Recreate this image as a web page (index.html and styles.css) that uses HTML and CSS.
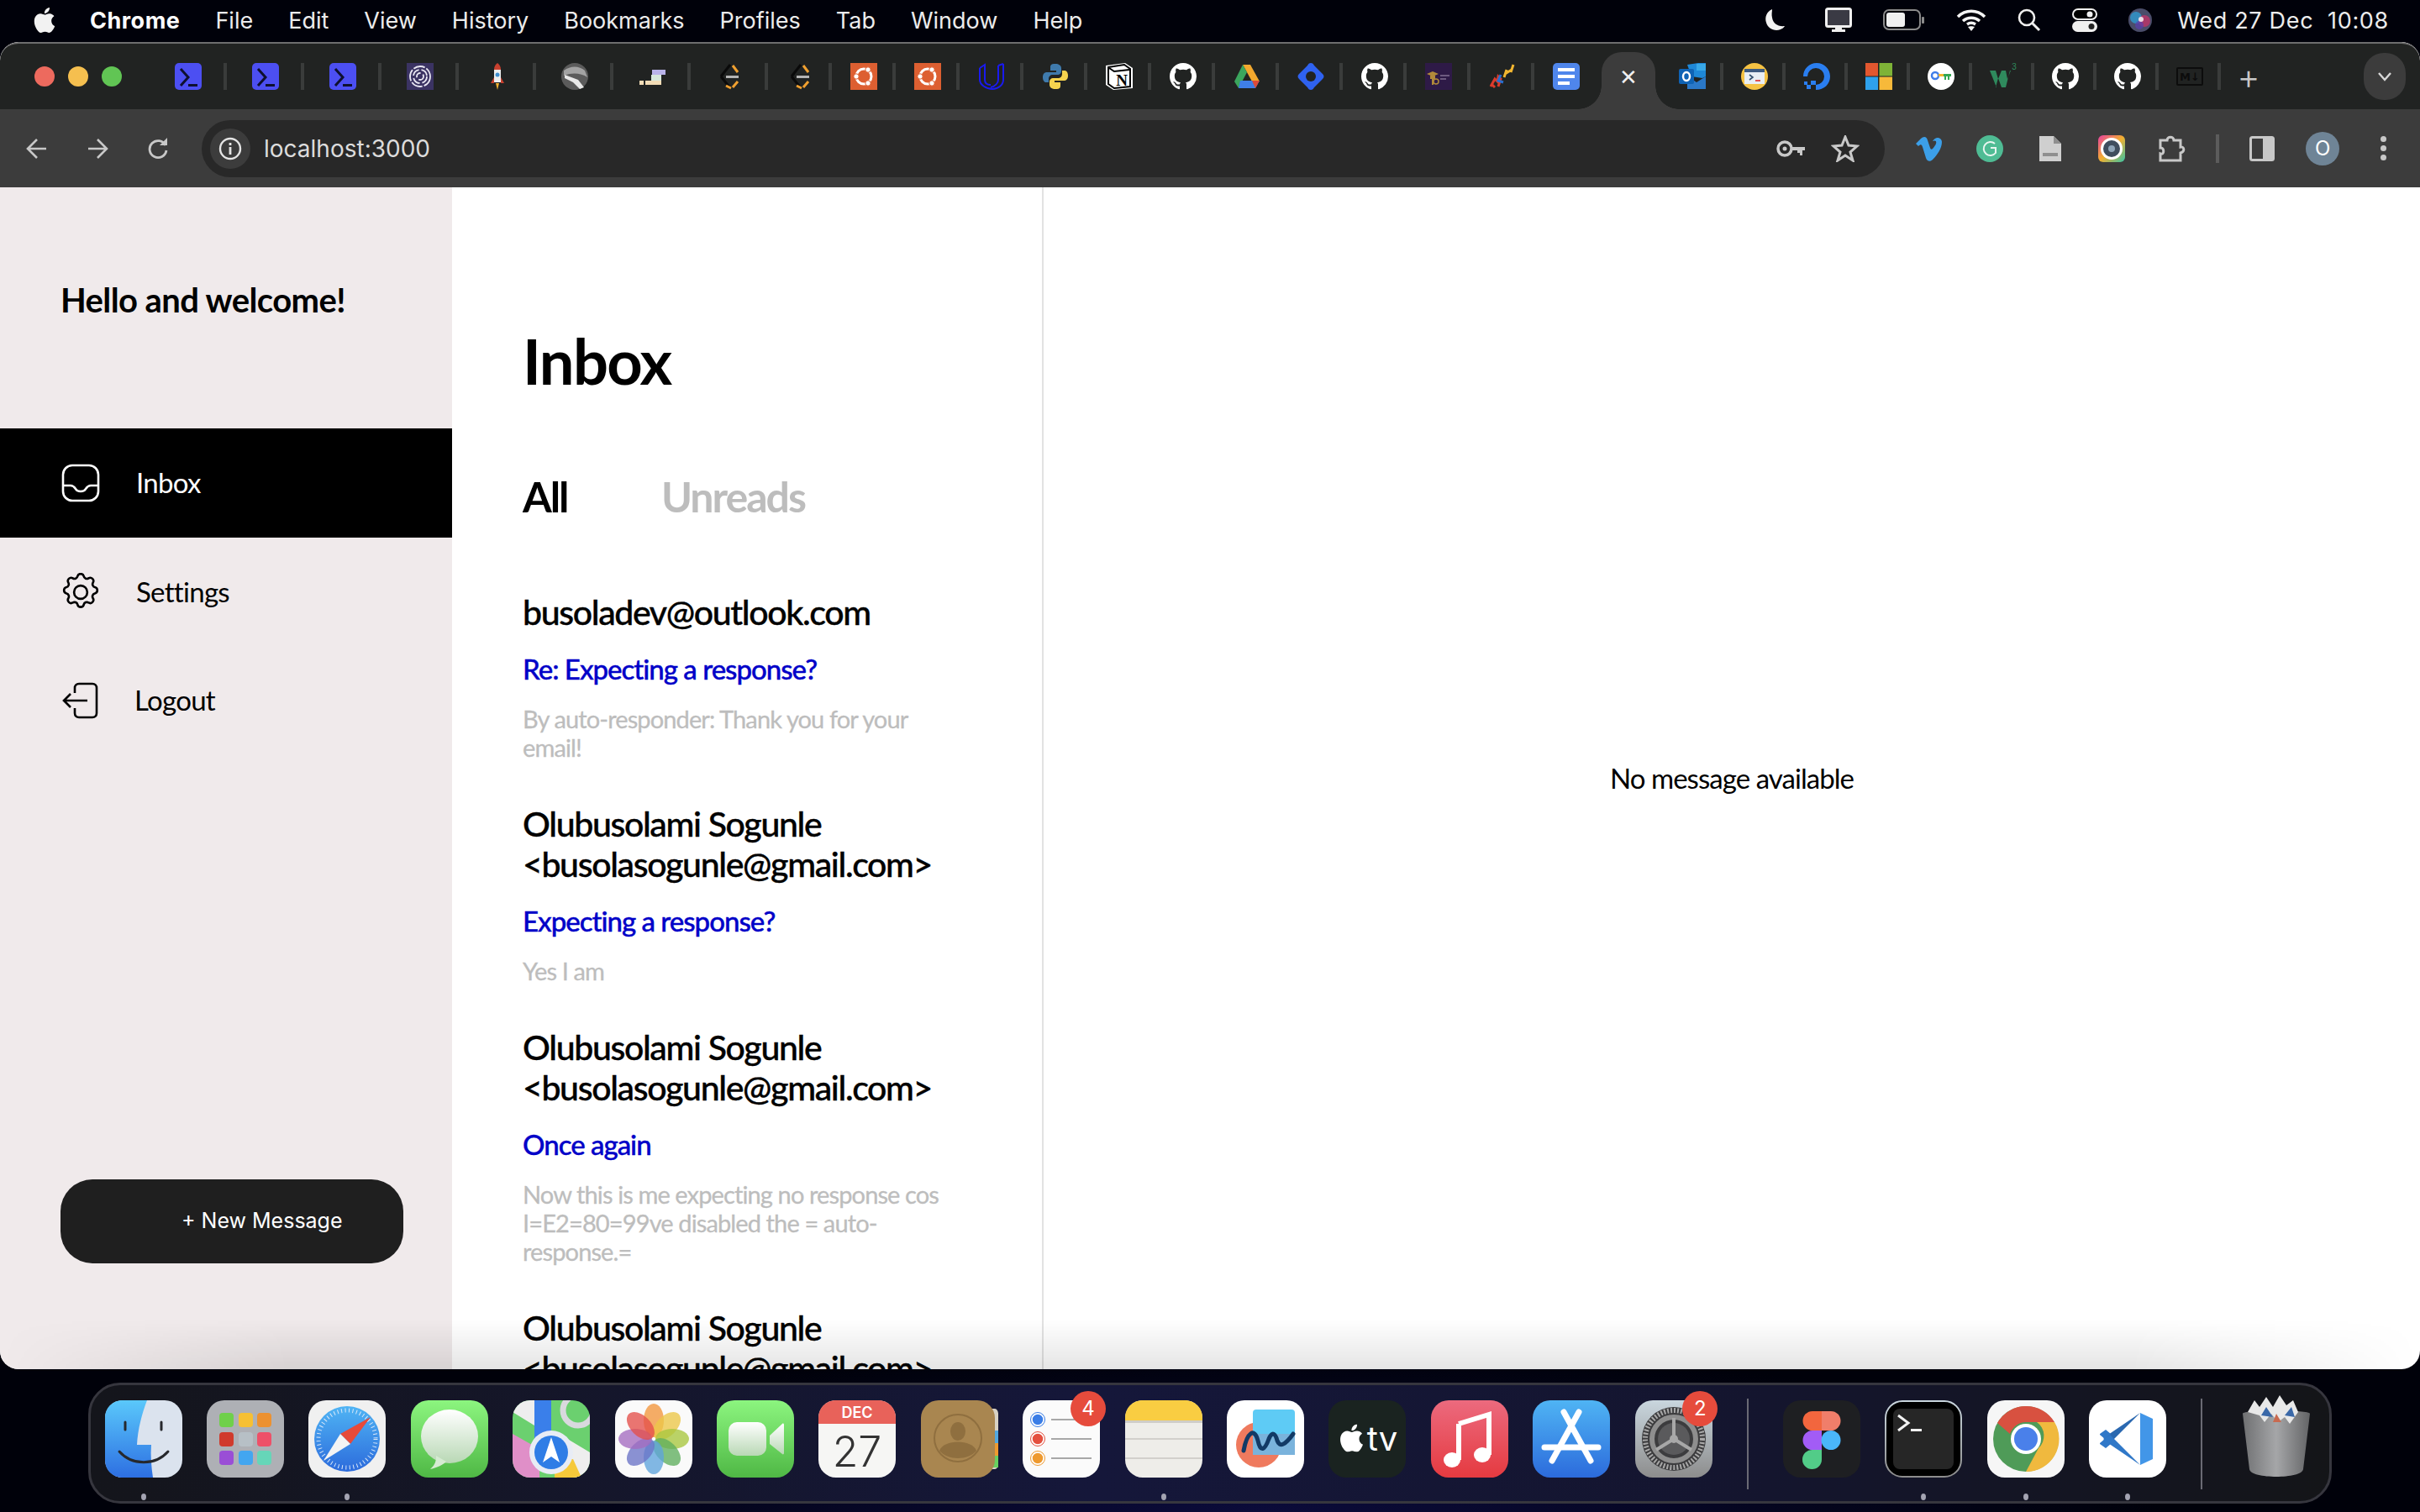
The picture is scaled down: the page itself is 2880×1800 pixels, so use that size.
FILE: index.html
```html
<!DOCTYPE html>
<html lang="en">
<head>
  <meta charset="UTF-8" />
  <title>Inbox</title>
  <link rel="stylesheet" href="styles.css">
</head>
<body>
  <!-- shared icons -->
  <svg class="defs" width="0" height="0">
    <defs>
      <symbol id="term" viewBox="0 0 32 32"><rect width="32" height="32" rx="5" fill="#4c4ff2"/><path d="M7 7l9 10-9 10" fill="none" stroke="#0e1030" stroke-width="3"/><rect x="16" y="25" width="11" height="3" fill="#0e1030"/></symbol>
      <symbol id="github" viewBox="0 0 16 16"><path fill="#fff" d="M8 0C3.58 0 0 3.58 0 8c0 3.54 2.29 6.53 5.47 7.59.4.07.55-.17.55-.38 0-.19-.01-.82-.01-1.49-2.01.37-2.53-.49-2.69-.94-.09-.23-.48-.94-.82-1.13-.28-.15-.68-.52-.01-.53.63-.01 1.08.58 1.23.82.72 1.21 1.87.87 2.33.66.07-.52.28-.87.51-1.07-1.78-.2-3.64-.89-3.64-3.95 0-.87.31-1.59.82-2.15-.08-.2-.36-1.02.08-2.12 0 0 .67-.21 2.2.82.64-.18 1.32-.27 2-.27.68 0 1.36.09 2 .27 1.53-1.04 2.2-.82 2.2-.82.44 1.1.16 1.92.08 2.12.51.56.82 1.27.82 2.15 0 3.07-1.87 3.75-3.65 3.95.29.25.54.73.54 1.48 0 1.07-.01 1.93-.01 2.2 0 .21.15.46.55.38A8.013 8.013 0 0016 8c0-4.42-3.58-8-8-8z"/></symbol>
      <symbol id="ubuntu" viewBox="0 0 32 32"><rect width="32" height="32" fill="#dd5f31"/><circle cx="16" cy="16" r="9" fill="none" stroke="#fff" stroke-width="3"/><circle cx="7" cy="16" r="3.2" fill="#fff" stroke="#dd5f31"/><circle cx="21" cy="8" r="3.2" fill="#fff" stroke="#dd5f31"/><circle cx="21" cy="24" r="3.2" fill="#fff" stroke="#dd5f31"/></symbol>
      <symbol id="bracket" viewBox="0 0 32 32"><path d="M17 2L6 16" fill="none" stroke="#0a0a0a" stroke-width="3"/><path d="M6 16l11 14" fill="none" stroke="#0a0a0a" stroke-width="3"/><path d="M20 3l6 8M20 29l6-7M12 27l6 3" fill="none" stroke="#f0a030" stroke-width="3"/><rect x="12" y="15" width="15" height="3" fill="#b4b4b4"/></symbol>
      <symbol id="apple" viewBox="0 0 24 24"><path fill="currentColor" d="M12.152 6.896c-.948 0-2.415-1.078-3.96-1.04-2.04.027-3.91 1.183-4.961 3.014-2.117 3.675-.546 9.103 1.519 12.09 1.013 1.454 2.208 3.09 3.792 3.039 1.52-.065 2.09-.987 3.935-.987 1.831 0 2.35.987 3.96.948 1.637-.026 2.676-1.48 3.676-2.948 1.156-1.688 1.636-3.325 1.662-3.415-.039-.013-3.182-1.221-3.22-4.857-.026-3.04 2.48-4.494 2.597-4.559-1.429-2.09-3.623-2.324-4.39-2.376-2-.156-3.675 1.09-4.61 1.09zM15.53 3.83c.843-1.012 1.4-2.427 1.245-3.83-1.207.052-2.662.805-3.532 1.818-.78.896-1.454 2.338-1.273 3.714 1.338.104 2.715-.688 3.559-1.701"/></symbol>
      <linearGradient id="gGreen" x1="0" y1="0" x2="0" y2="1"><stop offset="0" stop-color="#8cf57f"/><stop offset="1" stop-color="#4fb845"/></linearGradient>
      <linearGradient id="gWhite" x1="0" y1="0" x2="0" y2="1"><stop offset="0" stop-color="#fff"/><stop offset="1" stop-color="#b9d8b5"/></linearGradient>
      <linearGradient id="gBlue" x1="0" y1="0" x2="0" y2="1"><stop offset="0" stop-color="#4fb4f4"/><stop offset="1" stop-color="#2c6bdc"/></linearGradient>
      <linearGradient id="gFinder" x1="0" y1="0" x2="0" y2="1"><stop offset="0" stop-color="#5ac8fb"/><stop offset="1" stop-color="#2d6fe2"/></linearGradient>
      <linearGradient id="gRed" x1="0" y1="0" x2="0" y2="1"><stop offset="0" stop-color="#ec6a7e"/><stop offset="1" stop-color="#e53a40"/></linearGradient>
      <linearGradient id="gGrey" x1="0" y1="0" x2="0" y2="1"><stop offset="0" stop-color="#c9d6de"/><stop offset="1" stop-color="#8d8d8d"/></linearGradient>
      <linearGradient id="gTrash" x1="0" y1="0" x2="1" y2="0"><stop offset="0" stop-color="#6f7072"/><stop offset=".5" stop-color="#a5a6a8"/><stop offset="1" stop-color="#636466"/></linearGradient>
    </defs>
  </svg>

  <header class="menubar">
    <svg class="apple" width="30" height="36"><use href="#apple"/></svg>
    <nav class="menus">
      <span class="menu-app">Chrome</span>
      <span>File</span><span>Edit</span><span>View</span><span>History</span><span>Bookmarks</span><span>Profiles</span><span>Tab</span><span>Window</span><span>Help</span>
    </nav>
    <div class="status">
      <svg class="moon" width="26" height="28" viewBox="0 0 26 28"><path fill="#f2f2f2" d="M10 1C3 4 1 11 3 17c2 7 10 11 17 8 2-1 4-2 5-4-8 1-14-3-15-10-1-4 0-7 0-10z"/></svg>
      <svg width="32" height="30" viewBox="0 0 32 30"><rect x="1.500" y="1.500" width="29" height="21" rx="2" fill="#3a3a44" stroke="#f0f0f0" stroke-width="3"/><rect x="12" y="23" width="8" height="4" fill="#f0f0f0"/><rect x="8" y="26" width="16" height="3" fill="#f0f0f0"/></svg>
      <svg width="50" height="26" viewBox="0 0 50 26"><rect x="1" y="1" width="43" height="23" rx="6" fill="none" stroke="#8a8a8a" stroke-width="2"/><rect x="4" y="4" width="22" height="17" rx="3" fill="#f0f0f0"/><rect x="46" y="9" width="3" height="8" rx="1" fill="#8a8a8a"/></svg>
      <svg width="36" height="26" viewBox="0 0 36 26"><path d="M2 9c9-9 23-9 32 0M8 14c6-5 14-5 20 0M13 18c3-2 7-2 10 0" fill="none" stroke="#f4f4f4" stroke-width="3.500"/><path d="M18 26l-4-5c2-1 6-1 8 0z" fill="#f4f4f4"/></svg>
      <svg width="28" height="28" viewBox="0 0 28 28"><circle cx="11" cy="11" r="9" fill="none" stroke="#f0f0f0" stroke-width="2.600"/><path d="M17 17l9 9" stroke="#f0f0f0" stroke-width="3"/></svg>
      <svg width="30" height="28" viewBox="0 0 30 28"><rect x="1" y="1" width="28" height="12" rx="6" fill="#000" stroke="#f0f0f0" stroke-width="2"/><circle cx="21" cy="7" r="3.500" fill="#f0f0f0"/><rect x="0" y="15" width="30" height="13" rx="6.500" fill="#f0f0f0"/><circle cx="23" cy="21.500" r="3.500" fill="#222"/></svg>
      <svg width="28" height="28" viewBox="0 0 28 28"><circle cx="14" cy="14" r="14" fill="#4a4d6a"/><circle cx="9" cy="11" r="7" fill="#2e9ad0" opacity=".8"/><circle cx="19" cy="15" r="7" fill="#d0306a" opacity=".7"/><circle cx="13" cy="20" r="5" fill="#5a3fb0" opacity=".7"/><circle cx="15" cy="13" r="3" fill="#fff" opacity=".8"/></svg>
      <span class="clock">Wed 27 Dec&nbsp; 10:08</span>
    </div>
  </header>

  <main class="window">
    <div class="tabstrip">
      <div class="lights"><i class="light red"></i><i class="light amber"></i><i class="light green"></i></div>
      <div class="tab wide"><svg width="32" height="32"><use href="#term"/></svg></div>
      <div class="tab wide"><svg width="32" height="32"><use href="#term"/></svg></div>
      <div class="tab wide"><svg width="32" height="32"><use href="#term"/></svg></div>
      <div class="tab wide"><svg width="32" height="32" viewBox="0 0 32 32"><rect width="32" height="32" fill="#3b3363"/><circle cx="16" cy="16" r="12" fill="none" stroke="#e8e6f2" stroke-width="1.800" stroke-dasharray="14 2"/><circle cx="16" cy="16" r="8" fill="none" stroke="#e8e6f2" stroke-width="1.800" stroke-dasharray="10 3"/><circle cx="16" cy="16" r="4" fill="none" stroke="#e8e6f2" stroke-width="1.800" stroke-dasharray="8 3"/></svg></div>
      <div class="tab wide"><svg width="32" height="32" viewBox="0 0 32 32"><path d="M16 0c3 2 4 5 4 8H12c0-3 1-6 4-8z" fill="#c8402f"/><rect x="12" y="8" width="8" height="15" fill="#eee"/><circle cx="16" cy="14" r="2.500" fill="#3f8fd0"/><path d="M12 17l-4 7h4zM20 17l4 7h-4z" fill="#c8402f"/><path d="M14 24h4l-2 8z" fill="#f3b030"/></svg></div>
      <div class="tab wide"><svg width="32" height="32" viewBox="0 0 32 32"><circle cx="16" cy="16" r="16" fill="#5b5b5b"/><path d="M3 9c8-6 18-6 25 0l3 8c-7-5-18-6-28-2z" fill="#a3a3a3"/><path d="M4 14l16 6 7 9-5 2-8-8-10-5z" fill="#e8e8e8"/></svg></div>
      <div class="tab wide"><svg width="32" height="32" viewBox="0 0 32 32"><rect x="16" y="8" width="16" height="6" fill="#b9b3ea"/><rect x="15" y="14" width="12" height="7" fill="#d7e8dc"/><rect x="8" y="21" width="19" height="5" fill="#f2dcb6"/><rect x="1" y="21" width="5" height="5" fill="#f2dcb6"/></svg></div>
      <div class="tab wide"><svg width="32" height="32"><use href="#bracket"/></svg></div>
      <div class="tab"><svg width="32" height="32"><use href="#bracket"/></svg></div>
      <div class="tab"><svg width="32" height="32"><use href="#ubuntu"/></svg></div>
      <div class="tab"><svg width="32" height="32"><use href="#ubuntu"/></svg></div>
      <div class="tab"><svg width="32" height="32" viewBox="0 0 32 32"><path d="M2 6l6-4v18c0 4 3 6 7 6M30 1v19c0 6-6 11-13 11S2 26 2 20V6M24 3l6-2M24 3v17c0 4-4 8-9 9" fill="none" stroke="#1a1aef" stroke-width="2"/></svg></div>
      <div class="tab"><svg width="32" height="32" viewBox="0 0 32 32"><path d="M16 1C10 1 10 3 10 6v3h7v2H6c-3 0-5 2-5 6s2 6 4 6h3v-4c0-3 2-5 5-5h6c2 0 4-2 4-4V6c0-3-3-5-7-5z" fill="#3f7aac"/><path d="M16 31c6 0 6-2 6-5v-3h-7v-2h11c3 0 5-2 5-6s-2-6-4-6h-3v4c0 3-2 5-5 5H13c-2 0-4 2-4 4v4c0 3 3 5 7 5z" fill="#f6d44e"/></svg></div>
      <div class="tab"><svg width="32" height="32" viewBox="0 0 32 32"><path d="M0 3l23-3 9 6v24l-23 2-9-6z" fill="#fff"/><path d="M3 5l19-3 7 5v21l-19 2-7-5z" fill="#fff" stroke="#000" stroke-width="2"/><path d="M4 6l6 4 18-2" fill="none" stroke="#000" stroke-width="2"/><text class="fav-n" x="19" y="27" text-anchor="middle">N</text></svg></div>
      <div class="tab"><svg width="32" height="32"><use href="#github"/></svg></div>
      <div class="tab"><svg width="32" height="32" viewBox="0 0 32 32"><path d="M11 2h9l11 20H22z" fill="#f2a82e"/><path d="M11 2L1 22l5 8L16 11z" fill="#3ba55d"/><path d="M8 21h23l-5 9H6z" fill="#3f7fe8"/><path d="M22 21h9l-5 9z" fill="#dd4b39"/></svg></div>
      <div class="tab"><svg width="32" height="32" viewBox="0 0 32 32"><path d="M16 0c2 0 3 1 4 3l10 10c2 2 2 4 0 6L20 29c-1 2-2 3-4 3s-3-1-4-3L2 19c-2-2-2-4 0-6L12 3c1-2 2-3 4-3z" fill="#2f62f0"/><circle cx="16" cy="16" r="6" fill="#212322"/></svg></div>
      <div class="tab"><svg width="32" height="32"><use href="#github"/></svg></div>
      <div class="tab"><svg width="32" height="32" viewBox="0 0 32 32"><rect width="32" height="32" fill="#2e1a47"/><path d="M2 13l7-3 7 3-7 3z" fill="#b18a3a"/><rect x="6" y="15" width="6" height="4" fill="#b18a3a"/><rect x="8" y="19" width="2" height="7" fill="#b18a3a"/><circle cx="13" cy="22" r="3" fill="none" stroke="#b18a3a" stroke-width="1.500"/><rect x="18" y="14" width="11" height="2" fill="#6d5a80"/><rect x="18" y="18" width="7" height="2" fill="#6d5a80"/></svg></div>
      <div class="tab"><svg width="32" height="32" viewBox="0 0 32 32"><path d="M2 28l5-9 3 3 1-6 3 3-3 9M3 25l4 4" fill="none" stroke="#dc3b2c" stroke-width="3"/><path d="M14 14l-3 7 6 2" fill="none" stroke="#2a6fd0" stroke-width="3"/><path d="M21 8l-3 9M29 2l-3 9M19 13l8-5" fill="none" stroke="#f2b630" stroke-width="3"/></svg></div>
      <div class="tab last"><svg width="32" height="32" viewBox="0 0 32 32"><rect width="32" height="32" rx="5" fill="#4f86ec"/><rect x="6" y="6" width="20" height="4" fill="#fff"/><rect x="6" y="14" width="20" height="4" fill="#fff"/><rect x="6" y="22" width="14" height="4" fill="#fff"/></svg></div>
      <div class="tab-active"><span class="tab-close">&#x2715;</span></div>
      <div class="tab rest first-rest"><svg width="32" height="34" viewBox="0 0 32 34"><path d="M10 3l13-2h9v16l-4 2-13-2z" fill="#1e88d8"/><path d="M10 16l11 8 11-7v15H10z" fill="#2a78c8"/><rect x="21" y="2" width="11" height="8" fill="#38a8e8"/><rect y="8" width="18" height="18" rx="2" fill="#0f63b5"/><ellipse cx="9" cy="17" rx="4" ry="5" fill="none" stroke="#fff" stroke-width="2.500"/></svg></div>
      <div class="tab rest"><svg width="32" height="32" viewBox="0 0 32 32"><circle cx="16" cy="16" r="16" fill="#f5c243"/><rect x="4" y="7" width="24" height="18" fill="#e8eef4"/><rect x="4" y="7" width="24" height="4" fill="#3d5a80"/><path d="M10 14l4 3-4 3" fill="none" stroke="#33506f" stroke-width="1.600"/><rect x="17" y="20" width="6" height="2" fill="#e05050"/></svg></div>
      <div class="tab rest"><svg width="32" height="32" viewBox="0 0 32 32"><path d="M15 32v-6a10 10 0 10-10-10H0C0 7 7 0 16 0s16 7 16 16-7 16-17 16z" fill="#2a7ef0"/><rect x="9" y="21" width="6" height="5" fill="#2a7ef0"/><rect x="4" y="26" width="5" height="5" fill="#2a7ef0"/><rect x="1" y="22" width="4" height="4" fill="#2a7ef0"/></svg></div>
      <div class="tab rest"><svg width="32" height="32" viewBox="0 0 32 32"><rect width="15" height="15.500" fill="#e2572f"/><rect x="16.500" width="15.500" height="15.500" fill="#7eb337"/><rect y="16.500" width="15" height="15.500" fill="#2ea1ec"/><rect x="16.500" y="16.500" width="15.500" height="15.500" fill="#f7b93a"/></svg></div>
      <div class="tab rest"><svg width="32" height="32" viewBox="0 0 32 32"><circle cx="16" cy="16" r="16" fill="#fff"/><circle cx="9" cy="15" r="4" fill="none" stroke="#3f7de8" stroke-width="2.500"/><rect x="13" y="13" width="6" height="3" fill="#f2b630"/><rect x="19" y="13" width="9" height="3" fill="#34a853"/><rect x="24" y="16" width="2" height="4" fill="#34a853"/><rect x="20" y="16" width="2" height="4" fill="#34a853"/></svg></div>
      <div class="tab rest"><svg width="32" height="32" viewBox="0 0 32 32"><path d="M0 9h7l3 10 4-10h5l2 10 4-10h-1l-5 20h-5l-4-11-3 11H8z" fill="#2f8a5d"/><text class="fav-three" x="29" y="8" text-anchor="middle">3</text></svg></div>
      <div class="tab rest"><svg width="32" height="32"><use href="#github"/></svg></div>
      <div class="tab rest"><svg width="32" height="32"><use href="#github"/></svg></div>
      <div class="tab rest"><svg width="32" height="22" viewBox="0 0 32 22"><rect x="1" y="1" width="30" height="20" rx="1" fill="none" stroke="#0c0c0c" stroke-width="2"/><text class="fav-md" x="16" y="16" text-anchor="middle">M&#x2193;</text></svg></div>
      <div class="newtab">+</div>
      <div class="tabsearch"><svg width="18" height="12" viewBox="0 0 18 12"><path d="M2 2l7 8 7-8" fill="none" stroke="#d8d8d8" stroke-width="2.400"/></svg></div>
    </div>

    <div class="toolbar">
      <div class="tool"><svg width="26" height="26" viewBox="0 0 26 26"><path d="M24 13H3M13 2L2 13l11 11" fill="none" stroke="#c8c8c8" stroke-width="2.600"/></svg></div>
      <div class="tool"><svg width="26" height="26" viewBox="0 0 26 26"><path d="M2 13h21M13 2l11 11-11 11" fill="none" stroke="#c8c8c8" stroke-width="2.600"/></svg></div>
      <div class="tool"><svg width="26" height="26" viewBox="0 0 26 26"><path d="M22 9a10 10 0 10 1 6" fill="none" stroke="#c8c8c8" stroke-width="2.800"/><path d="M15 9h9V0z" fill="#c8c8c8"/></svg></div>
      <div class="omnibox">
        <div class="site-info"><svg width="28" height="28" viewBox="0 0 28 28"><circle cx="14" cy="14" r="12" fill="none" stroke="#e4e4e4" stroke-width="2.400"/><rect x="12.600" y="12" width="2.800" height="9" fill="#e4e4e4"/><rect x="12.600" y="7" width="2.800" height="3" fill="#e4e4e4"/></svg></div>
        <span class="url">localhost:3000</span>
        <svg class="omni-key" width="36" height="24" viewBox="0 0 36 24"><circle cx="11" cy="12" r="8" fill="none" stroke="#c8c8c8" stroke-width="3.500"/><circle cx="11" cy="12" r="2.500" fill="#c8c8c8"/><path d="M19 10h16v4h-3v6h-3v-3h-3v-3h-7z" fill="#c8c8c8"/></svg>
        <svg class="omni-star" width="34" height="32" viewBox="0 1 34 32"><path d="M17 3l4 10 10 1-8 7 3 10-9-6-9 6 3-10-8-7 10-1z" fill="none" stroke="#c8c8c8" stroke-width="3"/></svg>
      </div>
      <div class="ext"><svg width="32" height="30" viewBox="0 0 32 30"><path d="M1 9l3 3c3-3 4-2 5 1l4 13c1 4 5 5 8 2 6-6 11-14 11-21 0-5-7-8-11-1 5-2 5 2 3 5-3 5-5 6-6 3L15 5c-1-5-5-5-8-2z" fill="#3c9fe8"/></svg></div>
      <div class="ext"><svg width="32" height="32" viewBox="0 0 32 32"><circle cx="16" cy="16" r="16" fill="#4fbc94"/><path d="M22 10a8 8 0 10 1 11v-6h-6" fill="none" stroke="#e8f6f0" stroke-width="2"/></svg></div>
      <div class="ext"><svg width="28" height="32" viewBox="0 0 28 32"><path d="M1 1h17l9 9v21H1z" fill="#cfcfcf"/><path d="M18 1l9 9h-9z" fill="#8f8f8f"/><rect x="5" y="21" width="18" height="4" fill="#8f8f8f"/></svg></div>
      <div class="ext"><svg width="32" height="32" viewBox="0 0 32 32"><defs><linearGradient id="gCam" x1="0" y1="0" x2="1" y2="1"><stop offset="0" stop-color="#e83fa0"/><stop offset=".5" stop-color="#f2b030"/><stop offset="1" stop-color="#35c4a8"/></linearGradient></defs><rect width="32" height="32" rx="6" fill="url(#gCam)"/><circle cx="16" cy="16" r="13" fill="#fff"/><circle cx="16" cy="16" r="10" fill="#3f4e5e"/><circle cx="16" cy="16" r="4" fill="#8fa5b8"/></svg></div>
      <div class="ext nudge"><svg width="34" height="32" viewBox="0 0 34 32"><path d="M2 6h8c0-5 8-5 8 0h8v8c4-1 6 5 0 7v9H2v-8c5 2 5-8 0-7z" fill="none" stroke="#c8c8c8" stroke-width="3"/></svg></div>
      <div class="tool-sep"></div>
      <div class="ext"><svg width="30" height="30" viewBox="0 0 30 30"><rect x="1.500" y="1.500" width="27" height="27" rx="2" fill="none" stroke="#c8c8c8" stroke-width="3"/><rect x="16" y="2" width="12" height="26" fill="#c8c8c8"/></svg></div>
      <div class="ext"><div class="avatar">O</div></div>
      <div class="ext"><div class="kebab"><i></i><i></i><i></i></div></div>
    </div>

    <div class="app">
      <aside class="sidebar">
        <h2 class="hello">Hello and welcome!</h2>
        <a class="nav-item active">
          <svg width="46" height="46" viewBox="0 0 46 46"><rect x="2" y="2" width="42" height="42" rx="11" fill="none" stroke="currentColor" stroke-width="2.600"/><path d="M2 26h9c3 0 4 1 6 4 1 2 3 3 6 3s5-1 6-3c2-3 3-4 6-4h9" fill="none" stroke="currentColor" stroke-width="2.600"/></svg>
          <span>Inbox</span>
        </a>
        <a class="nav-item">
          <svg width="46" height="46" viewBox="1.500 1.500 21 21"><path d="M10.3 2.300c.4-1.700 3-1.700 3.400 0a1.700 1.700 0 002.600 1.100c1.500-.9 3.300.8 2.400 2.400a1.700 1.700 0 001 2.500c1.800.4 1.800 3 0 3.400a1.700 1.700 0 00-1 2.600c.9 1.500-.9 3.300-2.400 2.400a1.700 1.700 0 00-2.600 1c-.4 1.800-3 1.800-3.400 0a1.700 1.700 0 00-2.600-1c-1.500.9-3.300-.9-2.400-2.400a1.700 1.700 0 00-1-2.600c-1.800-.4-1.800-3 0-3.400a1.700 1.700 0 001-2.500c-.9-1.600.9-3.300 2.400-2.400a1.700 1.700 0 002.600-1.100z" transform="translate(0 1)" fill="none" stroke="currentColor" stroke-width="1.200"/><circle cx="12" cy="12" r="3.600" fill="none" stroke="currentColor" stroke-width="1.200"/></svg>
          <span>Settings</span>
        </a>
        <a class="nav-item logout">
          <svg width="46" height="46" viewBox="0 0 46 46"><path d="M16 14V8c0-3 2-5 5-5h16c3 0 5 2 5 5v30c0 3-2 5-5 5H21c-3 0-5-2-5-5v-6" fill="none" stroke="currentColor" stroke-width="2.600"/><path d="M31 23H3M11 15l-8 8 8 8" fill="none" stroke="currentColor" stroke-width="2.600"/></svg>
          <span>Logout</span>
        </a>
        <button class="new-message">+ New Message</button>
      </aside>

      <section class="list">
        <h1 class="list-title">Inbox</h1>
        <div class="list-tabs"><span class="list-tab">All</span><span class="list-tab muted">Unreads</span></div>
        <article class="mail">
          <h3>busoladev@outlook.com</h3>
          <h4>Re: Expecting a response?</h4>
          <p>By auto-responder: Thank you for your email!</p>
        </article>
        <article class="mail">
          <h3>Olubusolami Sogunle &lt;busolasogunle@gmail.com&gt;</h3>
          <h4>Expecting a response?</h4>
          <p>Yes I am</p>
        </article>
        <article class="mail">
          <h3>Olubusolami Sogunle &lt;busolasogunle@gmail.com&gt;</h3>
          <h4>Once again</h4>
          <p>Now this is me expecting no response cos I=E2=80=99ve disabled the = auto-response.=</p>
        </article>
        <article class="mail">
          <h3>Olubusolami Sogunle &lt;busolasogunle@gmail.com&gt;</h3>
        </article>
      </section>

      <section class="reader">No message available</section>
      <div class="dock-shadow"></div>
    </div>
  </main>

  <footer class="dock">
    <div class="dock-item"><svg width="92" height="92" viewBox="0 0 92 92"><rect width="92" height="92" rx="21" fill="#dbe3ee"/><path d="M21 0h29c-6 16-11 34-12 53h17c-1 13 0 26 2 39H21C9 92 0 83 0 71V21C0 9 9 0 21 0z" fill="url(#gFinder)"/><path d="M24 26v9M67 26v9" stroke="#26282c" stroke-width="3" stroke-linecap="round"/><path d="M17 61c15 17 43 17 58 0" fill="none" stroke="#26282c" stroke-width="3" stroke-linecap="round"/></svg><i class="run-dot"></i></div>
    <div class="dock-item"><svg width="92" height="92" viewBox="0 0 92 92"><rect width="92" height="92" rx="21" fill="#aeb0b5"/><rect x="15" y="15" width="17" height="17" rx="4" fill="#6fd04a"/><rect x="38" y="15" width="17" height="17" rx="4" fill="#f6c033"/><rect x="60" y="15" width="17" height="17" rx="4" fill="#ec9130"/><rect x="15" y="38" width="17" height="17" rx="4" fill="#d03a2c"/><rect x="38" y="38" width="17" height="17" rx="4" fill="#b7c0c6"/><rect x="60" y="38" width="17" height="17" rx="4" fill="#ee5068"/><rect x="15" y="60" width="17" height="17" rx="4" fill="#9a4ed6"/><rect x="38" y="60" width="17" height="17" rx="4" fill="#43a6f0"/><rect x="60" y="60" width="17" height="17" rx="4" fill="#66d6b8"/></svg></div>
    <div class="dock-item"><svg width="92" height="92" viewBox="0 0 92 92"><rect width="92" height="92" rx="21" fill="#f0f0f0"/><circle cx="46" cy="46" r="39" fill="url(#gBlue)"/><circle cx="46" cy="46" r="34" fill="none" stroke="#dbe8f8" stroke-width="5" stroke-dasharray="1 3.500"/><path d="M74 20L38 40l12 12z" fill="#e64a3a"/><path d="M18 72l20-32 12 12z" fill="#f4f4f4"/></svg><i class="run-dot"></i></div>
    <div class="dock-item"><svg width="92" height="92" viewBox="0 0 92 92"><rect width="92" height="92" rx="21" fill="url(#gGreen)"/><ellipse cx="46" cy="43" rx="34" ry="32" fill="url(#gWhite)"/><path d="M30 66c0 6-1 11-7 16 9-2 15-5 19-9z" fill="#d6ebd2"/></svg></div>
    <div class="dock-item"><svg width="92" height="92" viewBox="0 0 92 92"><defs><clipPath id="cMaps"><rect width="92" height="92" rx="21"/></clipPath></defs><g clip-path="url(#cMaps)"><rect width="92" height="92" fill="#6bd06f"/><path d="M0 0h26v30L0 14zM52 38l40 24v30H50z" fill="#eee"/><path d="M0 40l32 18v34H0z" fill="#e08fc8"/><path d="M50 70h22l10 22H50z" fill="#f6c93a"/><rect x="26" y="0" width="20" height="50" fill="#3a7fea"/><circle cx="78" cy="12" r="18" fill="none" stroke="#d9d9de" stroke-width="7"/><circle cx="46" cy="62" r="26" fill="#e8ecf5"/><circle cx="46" cy="62" r="20" fill="#2f7de6"/><path d="M46 44l10 30-10-7-10 7z" fill="#fff"/></g></svg></div>
    <div class="dock-item"><svg width="92" height="92" viewBox="0 0 92 92"><rect width="92" height="92" rx="21" fill="#fafafa"/><g fill-opacity=".78"><ellipse cx="46" cy="24" rx="12" ry="20" fill="#f2963c"/><ellipse cx="46" cy="24" rx="12" ry="20" fill="#ecc648" transform="rotate(45 46 46)"/><ellipse cx="46" cy="24" rx="12" ry="20" fill="#a8c63e" transform="rotate(90 46 46)"/><ellipse cx="46" cy="24" rx="12" ry="20" fill="#5fae5e" transform="rotate(135 46 46)"/><ellipse cx="46" cy="24" rx="12" ry="20" fill="#5fa4dc" transform="rotate(180 46 46)"/><ellipse cx="46" cy="24" rx="12" ry="20" fill="#6a73c6" transform="rotate(225 46 46)"/><ellipse cx="46" cy="24" rx="12" ry="20" fill="#a46cc0" transform="rotate(270 46 46)"/><ellipse cx="46" cy="24" rx="12" ry="20" fill="#e4504a" transform="rotate(315 46 46)"/></g></svg></div>
    <div class="dock-item"><svg width="92" height="92" viewBox="0 0 92 92"><rect width="92" height="92" rx="21" fill="url(#gGreen)"/><rect x="14" y="26" width="45" height="40" rx="10" fill="url(#gWhite)"/><path d="M63 42l15-14c1-1 2 0 2 1v34c0 1-1 2-2 1L63 52z" fill="url(#gWhite)"/></svg></div>
    <div class="dock-item"><svg width="92" height="92" viewBox="0 0 92 92"><rect width="92" height="92" rx="21" fill="#f6f6f4"/><path d="M0 28V21C0 9 9 0 21 0h50c12 0 21 9 21 21v7z" fill="#e8625a"/><text class="cal-month" x="46" y="21" text-anchor="middle">DEC</text><text class="cal-day" x="46" y="79" text-anchor="middle">27</text></svg></div>
    <div class="dock-item"><svg width="92" height="92" viewBox="0 0 92 92"><path d="M84 10h4c2 0 4 3 4 6v60c0 3-2 6-4 6h-4z" fill="#d8d2c4"/><rect x="86" y="36" width="6" height="15" fill="#52a8e0"/><rect x="86" y="51" width="6" height="15" fill="#ee9a30"/><rect x="86" y="66" width="6" height="14" fill="#68d060"/><rect width="88" height="92" rx="21" fill="#a98650"/><circle cx="44" cy="45" r="28" fill="none" stroke="#8f6f3f" stroke-width="2"/><ellipse cx="44" cy="37" rx="9" ry="11" fill="#8f6f3f"/><path d="M22 60c5-14 39-14 44 0-10 12-34 12-44 0z" fill="#8f6f3f"/></svg></div>
    <div class="dock-item"><svg width="92" height="92" viewBox="0 0 92 92"><rect width="92" height="92" rx="21" fill="#fbfbfb"/><circle cx="18" cy="23" r="7" fill="#3a7de6" stroke="#fff" stroke-width="1.500"/><circle cx="18" cy="23" r="8.500" fill="none" stroke="#3a7de6"/><circle cx="18" cy="46" r="7" fill="#e4503f" stroke="#fff" stroke-width="1.500"/><circle cx="18" cy="46" r="8.500" fill="none" stroke="#e4503f"/><circle cx="18" cy="69" r="7" fill="#ee9a30" stroke="#fff" stroke-width="1.500"/><circle cx="18" cy="69" r="8.500" fill="none" stroke="#ee9a30"/><rect x="34" y="22" width="48" height="2" fill="#a8a8a8"/><rect x="34" y="45" width="48" height="2" fill="#a8a8a8"/><rect x="34" y="68" width="48" height="2" fill="#a8a8a8"/></svg><span class="badge">4</span></div>
    <div class="dock-item"><svg width="92" height="92" viewBox="0 0 92 92"><rect width="92" height="92" rx="21" fill="#eeede9"/><path d="M0 24v-3C0 9 9 0 21 0h50c12 0 21 9 21 21v3z" fill="#f9cd42"/><rect y="24" width="92" height="3" fill="#cfcdc8"/><rect y="45" width="92" height="2" fill="#d2d0cc"/><rect y="68" width="92" height="2" fill="#d2d0cc"/></svg><i class="run-dot"></i></div>
    <div class="dock-item"><svg width="92" height="92" viewBox="0 0 92 92"><rect width="92" height="92" rx="21" fill="#fff"/><circle cx="38" cy="53" r="27" fill="#ef7a5e"/><rect x="31" y="11" width="50" height="54" rx="4" fill="#5ecbf5"/><rect x="31" y="40" width="50" height="25" fill="#7ab3dc"/><path d="M20 60c4-22 13-28 17-12 3 14 8 12 13-2 4-10 8-6 10 2 3 8 9 6 19-8" fill="none" stroke="#123a66" stroke-width="5" stroke-linecap="round"/></svg></div>
    <div class="dock-item"><svg width="92" height="92" viewBox="0 0 92 92"><rect width="92" height="92" rx="21" fill="#1a2320"/><svg x="11" y="27" width="33" height="36" viewBox="0 0 24 24" color="#fff"><use href="#apple"/></svg><text class="tv-label" x="64" y="60" text-anchor="middle">tv</text></svg></div>
    <div class="dock-item"><svg width="92" height="92" viewBox="0 0 92 92"><rect width="92" height="92" rx="21" fill="url(#gRed)"/><path d="M33 28l36-11v48" fill="none" stroke="#fff" stroke-width="6"/><path d="M33 28v43" stroke="#fff" stroke-width="6"/><ellipse cx="25" cy="71" rx="10" ry="9" fill="#fff"/><ellipse cx="61" cy="65" rx="10" ry="9" fill="#fff"/></svg></div>
    <div class="dock-item"><svg width="92" height="92" viewBox="0 0 92 92"><rect width="92" height="92" rx="21" fill="url(#gBlue)"/><path d="M55 14L23 72M37 14l32 58" stroke="#fff" stroke-width="7" stroke-linecap="round"/><path d="M14 56h64" stroke="#fff" stroke-width="7" stroke-linecap="round"/></svg></div>
    <div class="dock-item"><svg width="92" height="92" viewBox="0 0 92 92"><rect width="92" height="92" rx="21" fill="url(#gGrey)"/><circle cx="46" cy="46" r="38" fill="#3c3c3e"/><circle cx="46" cy="46" r="34" fill="none" stroke="#a8a8a8" stroke-width="6" stroke-dasharray="2 2"/><circle cx="46" cy="46" r="26" fill="none" stroke="#8e8e8e" stroke-width="6"/><circle cx="46" cy="46" r="19" fill="#5a5a5c"/><path d="M46 46V21M46 46l21 13M46 46L25 59" stroke="#a8a8a8" stroke-width="4"/><circle cx="46" cy="46" r="5" fill="#a8a8a8"/></svg><span class="badge">2</span></div>
    <div class="dock-sep"></div>
    <div class="dock-item"><svg width="92" height="92" viewBox="0 0 92 92"><rect width="92" height="92" rx="21" fill="#1e1f22"/><path d="M46 13H35a11.500 11.500 0 000 23h11z" fill="#f2663e"/><path d="M46 13h11a11.500 11.500 0 010 23H46z" fill="#f07e6a"/><path d="M46 36H35a11.500 11.500 0 000 23h11z" fill="#a25cf6"/><circle cx="57" cy="47.500" r="11.500" fill="#4ab6fb"/><path d="M35 59h11v11.500a11.500 11.500 0 11-11-11.500z" fill="#52cc88"/></svg></div>
    <div class="dock-item"><svg width="92" height="92" viewBox="0 0 92 92"><rect x="1" y="1" width="90" height="90" rx="20" fill="#000" stroke="url(#gGrey)" stroke-width="2"/><rect x="10" y="10" width="72" height="72" rx="8" fill="#262626"/><path d="M16 18l12 9-12 9" fill="none" stroke="#f2f2f2" stroke-width="3"/><rect x="31" y="34" width="13" height="3" fill="#f2f2f2"/></svg><i class="run-dot"></i></div>
    <div class="dock-item"><svg width="92" height="92" viewBox="0 0 92 92"><rect width="92" height="92" rx="21" fill="#f6f6f6"/><circle cx="46" cy="46" r="39" fill="#4f9b58"/><path d="M46 7a39 39 0 0134 19H46a20 20 0 00-19 14L12 27A39 39 0 0146 7z" fill="#d85140"/><path d="M80 26a39 39 0 01-34 59l15-28a20 20 0 00-2-31z" fill="#f0b93e"/><circle cx="46" cy="46" r="18" fill="#fff"/><circle cx="46" cy="46" r="14" fill="#4a80ea"/></svg><i class="run-dot"></i></div>
    <div class="dock-item"><svg width="92" height="92" viewBox="0 0 92 92"><rect width="92" height="92" rx="21" fill="#fff"/><path d="M61 15l-36 36-8-6 44-30z" fill="#2a68b0"/><path d="M61 77L25 41l-8 6 44 30z" fill="#3078c8"/><path d="M61 15l15 7v48l-15 7z" fill="#4296e8"/><path d="M13 40l7-5 6 5-13 11zM13 52l7 5 6-5-13-11z" fill="#3078c8"/></svg><i class="run-dot"></i></div>
    <div class="dock-sep"></div>
    <div class="dock-item"><svg width="92" height="104" viewBox="0 0 92 104" class="trash"><path d="M6 24c0-5 80-5 80 0l-8 66c-1 12-63 12-64 0z" fill="url(#gTrash)"/><path d="M12 22l8-14 6 8 8-12 8 12 8-14 8 12 8-6 6 14-10 14-6-8-8 6-8-10-8 10-6-8z" fill="#e8e8e8"/><path d="M28 26l6-10 8 12zM56 26l8-10 4 12z" fill="#3a68a8"/><path d="M42 34l4-10 6 10z" fill="#c86a50"/></svg></div>
  </footer>
</body>
</html>
```

FILE: styles.css
```css
* {
  box-sizing: border-box;
}
body {
  margin: 0;
  width: 2880px;
  height: 1800px;
  overflow: hidden;
  display: flex;
  flex-direction: column;
  font-family: Lato, "Open Sans", sans-serif;
  background: radial-gradient(ellipse 1200px 220px at 1500px 1800px, #0b0b3a, #00010a 90%) #00010a;
}
.defs {
  position: absolute;
}

/* menu bar */
.menubar {
  height: 50px;
  flex: none;
  display: flex;
  align-items: center;
  padding: 0 37px 2px 38px;
  color: #ececec;
  font-family: Inter, "Liberation Sans", sans-serif;
  font-size: 27px;
}
.apple {
  color: #f2f2f2;
  margin-right: 39px;
}
.menus {
  display: flex;
  gap: 42px;
}
.menu-app {
  font-weight: 700;
  letter-spacing: 0.500px;
  color: #fff;
}
.status {
  margin-left: auto;
  display: flex;
  align-items: center;
  gap: 37px;
}
.moon {
  margin-right: 10px;
}
.clock {
  margin-left: -7px;
  letter-spacing: 0.700px;
}

/* browser window */
.window {
  height: 1580px;
  flex: none;
  display: flex;
  flex-direction: column;
  overflow: hidden;
  border-radius: 22px;
  background: #fff;
}
.tabstrip {
  height: 80px;
  flex: none;
  display: flex;
  align-items: center;
  padding-left: 41px;
  background: #212322;
  border-top: 2px solid #6e6e6e;
  border-radius: 22px 22px 0 0;
}
.lights {
  width: 137px;
  display: flex;
  gap: 16px;
}
.light {
  width: 24px;
  height: 24px;
  border-radius: 50%;
}
.red { background: #ed6a5e; }
.amber { background: #f5bf4f; }
.green { background: #61c554; }
.tab {
  width: 76px;
  height: 32px;
  flex: none;
  display: flex;
  align-items: center;
  justify-content: center;
  padding-left: 4px;
  border-right: 4px solid #3a3c3b;
}
.tab.wide {
  width: 92px;
}
.tab.rest {
  width: 74px;
}
.tab.last {
  border-right-color: transparent;
}
.first-rest {
  margin-left: 7px;
}
.tab-active {
  position: relative;
  width: 64px;
  height: 68px;
  margin-left: 4px;
  padding-bottom: 8px;
  align-self: flex-end;
  display: flex;
  align-items: center;
  justify-content: center;
  background: #3c3c3c;
  border-radius: 24px 24px 0 0;
}
.tab-active::before,
.tab-active::after {
  content: "";
  position: absolute;
  bottom: 0;
  width: 28px;
  height: 28px;
}
.tab-active::before {
  left: -28px;
  background: radial-gradient(circle at 0 0, transparent 27.500px, #3c3c3c 28px);
}
.tab-active::after {
  right: -28px;
  background: radial-gradient(circle at 100% 0, transparent 27.500px, #3c3c3c 28px);
}
.tab-close {
  color: #f0f0f0;
  font-size: 26px;
  font-family: "DejaVu Sans", sans-serif;
}
.newtab {
  width: 36px;
  margin-left: 15px;
  color: #c8c8c8;
  font-family: Inter, sans-serif;
  font-size: 42px;
  font-weight: 300;
  line-height: 42px;
  text-align: center;
}
.tabsearch {
  width: 50px;
  height: 56px;
  margin-left: auto;
  margin-right: 17px;
  display: flex;
  align-items: center;
  justify-content: center;
  border-radius: 24px;
  background: #3c3c3c;
}
.fav-n {
  font-family: "Liberation Serif", serif;
  font-size: 19px;
  font-weight: 700;
  fill: #000;
}
.fav-three {
  font-family: "Liberation Sans", sans-serif;
  font-size: 10px;
  fill: #2f8a5d;
}
.fav-md {
  font-family: "DejaVu Sans", sans-serif;
  font-size: 13px;
  font-weight: 700;
  fill: #0c0c0c;
}

/* toolbar */
.toolbar {
  height: 93px;
  flex: none;
  display: flex;
  align-items: center;
  padding-left: 8px;
  background: #3c3c3c;
}
.tool {
  width: 72px;
  display: flex;
  justify-content: center;
}
.omnibox {
  width: 2003px;
  height: 68px;
  margin-left: 16px;
  display: flex;
  align-items: center;
  padding-left: 10px;
  border-radius: 34px;
  background: #282828;
}
.site-info {
  width: 48px;
  height: 48px;
  display: flex;
  align-items: center;
  justify-content: center;
  border-radius: 50%;
  background: #3c3c3c;
}
.url {
  margin-left: 16px;
  color: #dcdcdc;
  font-family: Inter, sans-serif;
  font-size: 28px;
}
.omni-key {
  margin-left: auto;
}
.omni-star {
  margin: 0 30px 0 30px;
}
.ext {
  width: 72.500px;
  display: flex;
  justify-content: center;
  align-items: center;
}
.omnibox + .ext {
  margin-left: 16px;
}
.ext.nudge {
  padding-left: 2px;
}
.tool-sep {
  width: 4px;
  height: 34px;
  margin: 0 15px;
  background: #5c5c5c;
}
.avatar {
  width: 40px;
  height: 40px;
  border-radius: 50%;
  background: #6f8496;
  color: #fff;
  font-family: Inter, sans-serif;
  font-size: 24px;
  line-height: 40px;
  text-align: center;
}
.kebab {
  display: flex;
  flex-direction: column;
  gap: 4px;
}
.kebab i {
  width: 7px;
  height: 7px;
  border-radius: 50%;
  background: #c8c8c8;
}

/* mail app */
.app {
  position: relative;
  flex: 1;
  min-height: 0;
  display: flex;
}
.sidebar {
  width: 538px;
  flex: none;
  display: flex;
  flex-direction: column;
  background: #f0eaeb;
}
.hello {
  height: 287px;
  margin: 0;
  padding: 111px 0 0 72px;
  font-size: 40px;
  font-weight: 700;
  line-height: 46px;
  letter-spacing: -0.600px;
  color: #000;
}
.nav-item {
  height: 130px;
  flex: none;
  display: flex;
  align-items: center;
  gap: 43px;
  padding-left: 73px;
  color: #000;
  font-size: 33px;
  letter-spacing: -0.700px;
}
.nav-item span {
  margin-bottom: 3px;
}
.nav-item.active {
  background: #000;
  color: #fff;
}
.nav-item.logout {
  gap: 41px;
  margin-top: -1px;
}
.new-message {
  width: 408px;
  height: 100px;
  margin: auto 0 126px 72px;
  padding: 0 0 2px 144px;
  border: none;
  border-radius: 38px;
  background: #1f1f1f;
  color: #fff;
  font-family: Inter, sans-serif;
  font-size: 25px;
  text-align: left;
}
.list {
  width: 704px;
  flex: none;
  overflow: hidden;
  padding: 162px 90px 0 84px;
  border-right: 2px solid #e2e2e2;
}
.list-title {
  margin: 0;
  font-size: 74px;
  font-weight: 700;
  line-height: 90px;
  letter-spacing: -1.600px;
  color: #000;
}
.list-tabs {
  display: flex;
  margin-top: 84px;
  font-size: 50px;
  font-weight: 700;
  line-height: 64px;
  letter-spacing: -2px;
}
.list-tab {
  width: 165px;
  flex: none;
  color: #000;
}
.list-tab.muted {
  color: #bdbdbd;
}
.mail {
  margin-top: 50px;
}
.list-tabs + .mail {
  margin-top: 82px;
}
.mail h3 {
  margin: 0;
  font-size: 41px;
  font-weight: 500;
  line-height: 48px;
  letter-spacing: -1.350px;
  -webkit-text-stroke: 0.400px #000;
  color: #000;
}
.mail h4 {
  margin: 23px 0 0;
  font-size: 33px;
  font-weight: 500;
  line-height: 40px;
  letter-spacing: -1px;
  -webkit-text-stroke: 0.400px #0000c8;
  color: #0000c8;
}
.mail p {
  margin: 23px 0 0;
  font-size: 29px;
  line-height: 34px;
  letter-spacing: -0.880px;
  -webkit-text-stroke: 0.300px #bdbdbd;
  color: #bdbdbd;
}
.reader {
  flex: 1;
  display: flex;
  align-items: center;
  justify-content: center;
  padding-bottom: 2px;
  font-size: 33px;
  letter-spacing: -0.950px;
  color: #000;
}
.dock-shadow {
  position: absolute;
  left: 0;
  right: 0;
  bottom: 0;
  height: 60px;
  background: linear-gradient(transparent, rgba(0, 0, 0, 0.1));
  mask-image: linear-gradient(90deg, transparent, #000 12%, #000 88%, transparent);
}

/* dock */
.dock {
  width: 2670px;
  height: 144px;
  margin: 16px 0 0 105px;
  padding-left: 2px;
  flex: none;
  display: flex;
  border: 3px solid #36363e;
  border-radius: 38px;
  background: linear-gradient(90deg, #14151b, #15173a 45%, #14152e 75%, #141518);
}
.dock-item {
  position: relative;
  width: 121.400px;
  height: 138px;
  flex: none;
  display: flex;
  flex-direction: column;
  align-items: center;
  padding-top: 18px;
}
.run-dot {
  width: 6px;
  height: 8px;
  margin-top: 19px;
  border-radius: 50%;
  background: #a4a4b2;
}
.badge {
  position: absolute;
  top: 7px;
  right: 8px;
  width: 42px;
  height: 42px;
  border-radius: 50%;
  background: #e64b3c;
  color: #fff;
  font-family: Inter, sans-serif;
  font-size: 24px;
  line-height: 42px;
  text-align: center;
}
.dock-sep {
  width: 2px;
  height: 108px;
  margin: 16px 26.500px 0;
  flex: none;
  background: #6a6a74;
}
.trash {
  margin-top: -8px;
}
.cal-month {
  font-family: Inter, sans-serif;
  font-size: 18px;
  font-weight: 600;
  fill: #fff;
}
.cal-day {
  font-family: Inter, sans-serif;
  font-size: 50px;
  font-weight: 300;
  fill: #333;
}
.tv-label {
  font-family: Inter, sans-serif;
  font-size: 40px;
  fill: #fff;
}
```
